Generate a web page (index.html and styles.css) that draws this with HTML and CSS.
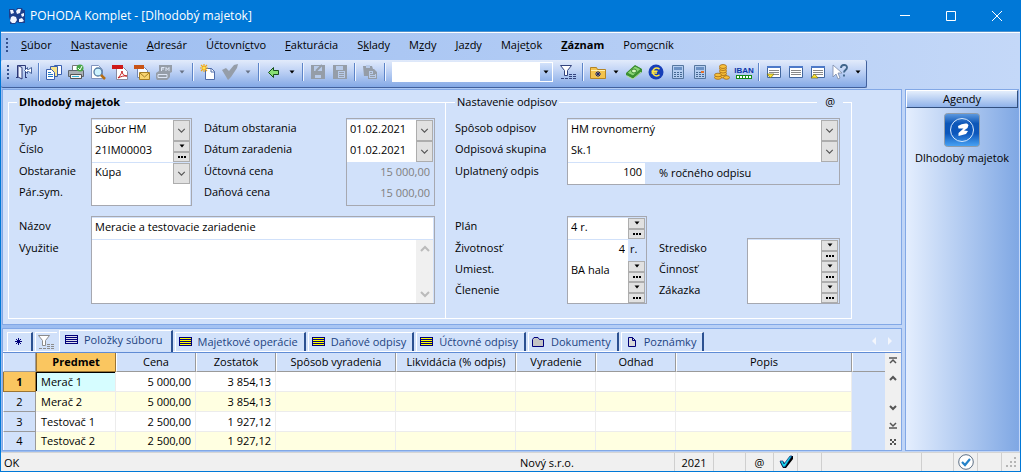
FILE: index.html
```html
<!DOCTYPE html>
<html lang="sk">
<head>
<meta charset="utf-8">
<title>POHODA Komplet - [Dlhodobý majetok]</title>
<meta name="viewport" content="width=device-width, initial-scale=1">
<link rel="stylesheet" href="styles.css">
</head>
<body>
<svg class="defs" aria-hidden="true">
  <symbol id="chev" viewBox="0 0 16 20"><path d="M4 8l4 4 4-4" fill="none" stroke="#555" stroke-width="1.4"/></symbol>
  <symbol id="tri" viewBox="0 0 8 8"><path d="M1.500 2.500h5L4 5.500z" fill="#000"/></symbol>
  <symbol id="dots" viewBox="0 0 8 8"><path d="M0 3h2v2H0zM3 3h2v2H3zM6 3h2v2H6z" fill="#000"/></symbol>
  <symbol id="grid-tab" viewBox="0 0 14 10"><path d="M0 0h13v9H0z" fill="#00007a"/><path d="M1 1.500h11M1 3.500h11M1 5.500h11M1 7.500h11" stroke="currentColor"/></symbol>
  <symbol id="funnel" viewBox="0 0 16 16"><path d="M.500 1.500h11L7.500 6.500v5h-3v-5z" fill="#fff" stroke="currentColor"/><path d="M9 10.500h3M13 10.500h3M1 14.500h3M5 14.500h3M9 14.500h3M13 14.500h3M9 12.500h3M13 12.500h3" stroke="currentColor"/></symbol>
  <symbol id="sheet" viewBox="0 0 16 16"><path d="M1.500 2.500h13v11h-13z" fill="#fff" stroke="#42679f"/><path d="M1 2h14v2H1z" fill="#4d79c8"/><path d="M3 6.500h10M3 8.500h10M3 10.500h10" stroke="#888"/></symbol>
  <symbol id="calc" viewBox="0 0 16 16"><path d="M2.500 1.500h11v13h-11z" fill="#b4cdf0" stroke="#56779f"/><path d="M4 3h8v3H4z" fill="#6c92c5"/><path d="M4 8.500h8M4 10.500h8M4 12.500h8" stroke="#456792" stroke-dasharray="2 1"/></symbol>
</svg>

<div class="window">
  <header class="titlebar">
    <svg class="logo" viewBox="0 0 16 16" aria-hidden="true"><path d="M0 1h5l2 2 1-3h5l1 2h2v13h-6l-2-1-2 2H1v-4L0 9z" fill="#1c3f8c"/><path d="M1 2h3l1 3-3 1zM7 3l2-2h3l-1 4-3 1zM12 6l3-1v3l-2 1zM2 9l2-1 3 1 1 3-2 3-3 0-2-2zM10 11l3-1 2 3-2 1h-3z" fill="#f0f5ff"/></svg>
    <h1>POHODA Komplet - [Dlhodobý majetok]</h1>
    <div class="caption">
      <button aria-label="Minimalizovať"><svg viewBox="0 0 12 12"><path d="M1 5.500h10" stroke="#fff"/></svg></button>
      <button aria-label="Maximalizovať"><svg viewBox="0 0 12 12"><path d="M1.500 1.500h9v9h-9z" fill="none" stroke="#fff"/></svg></button>
      <button aria-label="Zavrieť"><svg viewBox="0 0 12 12"><path d="M1 1l10 10M11 1L1 11" stroke="#fff"/></svg></button>
    </div>
  </header>

  <nav class="menubar">
    <span class="grip"></span>
    <button><u>S</u>úbor</button>
    <button><u>N</u>astavenie</button>
    <button><u>A</u>dresár</button>
    <button>Účtovní<u>c</u>tvo</button>
    <button><u>F</u>akturácia</button>
    <button>S<u>k</u>lady</button>
    <button>M<u>z</u>dy</button>
    <button><u>J</u>azdy</button>
    <button>Maje<u>t</u>ok</button>
    <button class="strong"><u>Z</u>áznam</button>
    <button>Pom<u>o</u>cník</button>
  </nav>

  <div class="toolbar" role="toolbar">
    <span class="grip"></span>
    <button class="tool" aria-label="Koniec"><svg viewBox="0 0 16 16"><path d="M1.500 13V1.500h8V13M0 13.500h2M9 13.500h2" fill="none" stroke="#2d3978"/><path d="M2 1.500l4 2v11.500l-4-2z" fill="#eef3ff" stroke="#2d3978"/><path d="M8.500 6.500l3-3v2h1l3-2v6l-3-2h-1v2z" fill="#fff" stroke="#48649d"/></svg></button>
    <span class="sep"></span>
    <button class="tool" aria-label="Kopírovať"><svg viewBox="0 0 16 16"><path d="M8.500 1.500h7v9h-7z" fill="#fff" stroke="#395fae"/><path d="M4.500 2.500h7v10h-7z" fill="#f7e48a" stroke="#395fae"/><path d="M.5 5.500h5l3 3v7h-8z" fill="#fff" stroke="#395fae"/><path d="M2 8.500h3M2 10.500h5M2 12.500h5" stroke="#2379c5"/></svg></button>
    <button class="tool" aria-label="Tlač"><svg viewBox="0 0 16 16"><path d="M4.500 1.500h7v5h-7z" fill="#fff" stroke="#777"/><path d="M.5 6.500h15v6H.5z" fill="#aab0b6" stroke="#5d646c"/><path d="M2.500 10.500h11v4h-11z" fill="#f5f5f5" stroke="#555"/><path d="M4 12.500h7" stroke="#36b3d8"/><circle cx="12" cy="4" r="3.500" fill="#46a647"/><path d="M10 4l2 2 2-4" fill="none" stroke="#fff"/></svg></button>
    <button class="tool" aria-label="Náhľad"><svg viewBox="0 0 16 16"><path d="M1.500 1.500h7l4 4v9h-11z" fill="#fff" stroke="#8193bd"/><circle cx="8" cy="8" r="4" fill="#cdf3ff" stroke="#547ca5" stroke-width="1.300"/><path d="M11 11l4 4" stroke="#b56d13" stroke-width="2.500"/></svg></button>
    <button class="tool" aria-label="PDF"><svg viewBox="0 0 16 16"><path d="M4.500 3.500h7l4 4v8h-11z" fill="#fff" stroke="#888ba0"/><path d="M0 1h11v4H0z" fill="#ce1919"/><path d="M6 14c3-3 4-6 4-7 0 3 2 5 5 5-3-.5-6 .5-9 2z" fill="none" stroke="#c31d1d"/></svg></button>
    <button class="tool" aria-label="E-mail"><svg viewBox="0 0 16 16"><path d="M3.500 3.500h7l3 3v7h-10z" fill="#f8faff" stroke="#7086b7"/><path d="M0 1h10v4H0z" fill="#c85315"/><path d="M5.500 8.500h10v7h-10z" fill="#f8d470" stroke="#a67e25"/><path d="M6 9l4.500 4L15 9" fill="none" stroke="#a67e25"/></svg></button>
    <button class="tool" aria-label="Fax"><svg viewBox="0 0 16 16"><path d="M3 1h13v7l-2 1v4l-3 3H1l-1-2V9l3-2z" fill="#959da8"/><path d="M5.500 7V3.500h3M6 5h2M10 7V3.500l1.500 2 1.500-2V7M2 10.500h9v3H2z" fill="none" stroke="#dce5f5"/></svg></button>
    <button class="drop dim" aria-label="Možnosti faxu"><svg viewBox="0 0 8 8"><use href="#tri"/></svg></button>
    <span class="sep"></span>
    <button class="tool" aria-label="Nový"><svg viewBox="0 0 16 16"><path d="M5.500 4.500h6l3 3v8h-9z" fill="#fff" stroke="#4e6cab"/><path d="M11 4v4h4" fill="none" stroke="#4e6cab"/><path d="M4 0v8M0 4h8M1 1l6 6M7 1L1 7" stroke="#f1a816" stroke-width="1.200"/><circle cx="4" cy="4" r="1.500" fill="#ffe252"/></svg></button>
    <button class="tool" aria-label="Potvrdiť"><svg viewBox="0 0 16 16"><path d="M0 6l4-2 3 3 5-6 4-1-1 4-6 9-3 3z" fill="#959da8"/></svg></button>
    <button class="drop dim" aria-label="Možnosti potvrdenia"><svg viewBox="0 0 8 8"><use href="#tri"/></svg></button>
    <span class="sep"></span>
    <button class="tool" aria-label="Späť"><svg viewBox="0 0 16 16"><path d="M2.500 8.500l5-5v3h5v4h-5v3z" fill="#88df73" stroke="#174f1d"/></svg></button>
    <button class="drop" aria-label="História"><svg viewBox="0 0 8 8"><use href="#tri"/></svg></button>
    <span class="sep"></span>
    <button class="tool" aria-label="Uložiť"><svg viewBox="0 0 16 16"><path d="M1 1h14v14H1z" fill="#959da8"/><path d="M4 2h8v5H4zM5 11h6v3H5z" fill="#b8cbea"/><path d="M6 7l6-6" stroke="#959da8" stroke-width="2"/></svg></button>
    <button class="tool" aria-label="Uložiť kópiu"><svg viewBox="0 0 16 16"><path d="M1 1h14v14H1z" fill="#959da8"/><path d="M4 2h7v4H4zM6 7h7v7H6z" fill="#b8cbea"/><path d="M7 8.500h5M7 10.500h5M7 12.500h5" stroke="#959da8"/></svg></button>
    <span class="sep"></span>
    <button class="tool" aria-label="Prilepiť"><svg viewBox="0 0 16 16"><path d="M1 2h9l1 3h1l3 3v7H6v-3H2z" fill="#959da8"/><path d="M7 7h4v3h3v4H7zM4 1h4v3H4z" fill="#b8cbea"/><path d="M8 8.500h2M8 10.500h5M8 12.500h5" stroke="#959da8"/></svg></button>
    <span class="sep"></span>
    <span class="search">
      <input type="text" aria-label="Hľadať">
      <button class="search-drop" aria-label="Zoznam hľadania"><svg viewBox="0 0 8 8"><use href="#tri"/></svg></button>
    </span>
    <button class="tool navy" aria-label="Filter"><svg viewBox="0 0 16 16"><use href="#funnel"/></svg></button>
    <span class="sep"></span>
    <button class="tool" aria-label="Priečinok"><svg viewBox="0 0 16 16"><path d="M.5 3.500h6l1 2h8v9H.5z" fill="#f3c34d" stroke="#b38527"/><path d="M1 6h14v1H1z" fill="#fff0ae"/><path d="M8 7v6M5 10h6M6 8l4 4M10 8l-4 4" stroke="#1b246c"/></svg></button>
    <button class="drop" aria-label="Zoznam priečinkov"><svg viewBox="0 0 8 8"><use href="#tri"/></svg></button>
    <button class="tool" aria-label="Peniaze"><svg viewBox="0 0 16 16"><path d="M0 9l9-8 7 4v3l-9 7-7-4z" fill="#3b9130"/><path d="M1 9l8-7 6 3-8 7z" fill="#8ad574" stroke="#378a2e"/><ellipse cx="8" cy="7" rx="2.500" ry="2" fill="#d6f6bf" stroke="#378a2e"/><path d="M1 12l6 3 8-7" fill="none" stroke="#b3e394"/></svg></button>
    <button class="tool" aria-label="Euro"><svg viewBox="0 0 16 16"><circle cx="8" cy="8" r="7.500" fill="#173eb8"/><path d="M11.500 5.200a4 4 0 1 0 0 5.600M3.500 7.200h6M3.500 9h5.500" fill="none" stroke="#ffe543" stroke-width="1.500"/></svg></button>
    <button class="tool" aria-label="Kalkulačka"><svg viewBox="0 0 16 16"><use href="#calc"/></svg></button>
    <button class="tool" aria-label="Kalkulačka meny"><svg viewBox="0 0 16 16"><use href="#calc"/><path d="M9 8h3" stroke="#e4702b" stroke-width="2"/></svg></button>
    <button class="tool" aria-label="Mince"><svg viewBox="0 0 16 16"><g fill="#f7c03c" stroke="#a56a12" stroke-width=".8"><ellipse cx="9" cy="12" rx="3.500" ry="2"/><ellipse cx="9" cy="9.500" rx="3.500" ry="2"/><ellipse cx="9" cy="7" rx="3.500" ry="2"/><ellipse cx="9" cy="4.500" rx="3.500" ry="2"/><ellipse cx="9" cy="2.500" rx="3.500" ry="2"/><ellipse cx="4" cy="13.500" rx="3.500" ry="1.800"/><ellipse cx="4" cy="11" rx="3.500" ry="1.800"/><ellipse cx="12.500" cy="13.500" rx="3" ry="1.800"/></g></svg></button>
    <button class="tool iban" aria-label="Kontrola IBAN"><span class="iban-text">IBAN</span><span class="iban-bar"></span></button>
    <span class="sep"></span>
    <button class="tool" aria-label="Dole"><svg viewBox="0 0 16 16"><use href="#sheet"/><path d="M1 10h7l-3.500 4z" fill="#ffe52e" stroke="#6e6817" stroke-width=".7"/></svg></button>
    <button class="tool" aria-label="Zoznam"><svg viewBox="0 0 16 16"><use href="#sheet"/></svg></button>
    <button class="tool" aria-label="Hore"><svg viewBox="0 0 16 16"><use href="#sheet"/><path d="M1 14h7l-3.500-4z" fill="#ffe52e" stroke="#6e6817" stroke-width=".7"/></svg></button>
    <button class="tool" aria-label="Pomoc"><svg viewBox="0 0 16 16"><path d="M1 1v12l3-3 2 5 2-1-2-5h4z" fill="#fff" stroke="#7889a8" stroke-width=".8"/><path d="M9 4c0-4 6-4 6-.5C15 6 12 6 12 8.500M12 10.500v2" fill="none" stroke="#42678c" stroke-width="1.900"/></svg></button>
    <button class="drop" aria-label="Možnosti pomoci"><svg viewBox="0 0 8 8"><use href="#tri"/></svg></button>
  </div>

  <div class="workspace">
    <div class="main">
      <form class="panel form">
        <fieldset class="group group-left">
          <legend class="strong">Dlhodobý majetok</legend>
          <div class="block">
            <div class="pair type">
              <div class="labels split-2"><label for="typ">Typ</label><label for="cislo">Číslo</label><label for="obst">Obstaranie</label><label for="par">Pár.sym.</label></div>
              <div class="box split-2">
                <div class="field"><select id="typ"><option>Súbor HM</option></select><svg class="combo"><use href="#chev"/></svg></div>
                <div class="field"><input id="cislo" value="21IM00003"><span class="spin"><button type="button" aria-label="Zoznam čísel"><svg><use href="#tri"/></svg></button><button type="button" aria-label="Vybrať číslo"><svg><use href="#dots"/></svg></button></span></div>
                <div class="field"><select id="obst"><option>Kúpa</option></select><svg class="combo"><use href="#chev"/></svg></div>
                <div class="field"><input id="par"></div>
              </div>
            </div>
            <div class="pair dates">
              <div class="labels split-2"><label for="dobst">Dátum obstarania</label><label for="dzar">Dátum zaradenia</label><label for="ucena">Účtovná cena</label><label for="dcena">Daňová cena</label></div>
              <div class="box split-2">
                <div class="field"><select id="dobst"><option>01.02.2021</option></select><svg class="combo"><use href="#chev"/></svg></div>
                <div class="field"><select id="dzar"><option>01.02.2021</option></select><svg class="combo"><use href="#chev"/></svg></div>
                <div class="field readonly"><input id="ucena" value="15 000,00" readonly></div>
                <div class="field readonly"><input id="dcena" value="15 000,00" readonly></div>
              </div>
            </div>
          </div>
          <div class="block">
            <div class="pair type wide">
              <div class="labels split-1"><label for="nazov">Názov</label><label for="vyuz">Využitie</label></div>
              <div class="box split-1">
                <div class="field"><input id="nazov" value="Meracie a testovacie zariadenie"></div>
                <div class="memo"><textarea id="vyuz"></textarea><span class="memo-scroll"><svg viewBox="0 0 10 8"><path d="M1 6l4-4 4 4" fill="none" stroke="#bbb" stroke-width="2"/></svg><svg viewBox="0 0 10 8"><path d="M1 2l4 4 4-4" fill="none" stroke="#bbb" stroke-width="2"/></svg></span></div>
              </div>
            </div>
          </div>
        </fieldset>

        <fieldset class="group group-right">
          <legend>Nastavenie odpisov</legend>
          <span class="at">@</span>
          <div class="block">
            <div class="pair method wide">
              <div class="labels split-2"><label for="spos">Spôsob odpisov</label><label for="skup">Odpisová skupina</label><label for="upl">Uplatnený odpis</label></div>
              <div class="box split-2">
                <div class="field"><select id="spos"><option>HM rovnomerný</option></select><svg class="combo"><use href="#chev"/></svg></div>
                <div class="field"><select id="skup"><option>Sk.1</option></select><svg class="combo"><use href="#chev"/></svg></div>
                <div class="field percent"><input id="upl" value="100"><span>% ročného odpisu</span></div>
              </div>
            </div>
          </div>
          <div class="block">
            <div class="pair method plan">
              <div class="labels split-1"><label for="plan">Plán</label><label for="ziv">Životnosť</label><label for="umi">Umiest.</label><label for="cle">Členenie</label></div>
              <div class="box split-1">
                <div class="field"><input id="plan" value="4 r."><span class="spin"><button type="button" aria-label="Zoznam plánov"><svg><use href="#tri"/></svg></button><button type="button" aria-label="Vybrať plán"><svg><use href="#dots"/></svg></button></span></div>
                <div class="field years"><input id="ziv" value="4"><span>r.</span></div>
                <div class="field"><input id="umi" value="BA hala"><span class="spin"><button type="button" aria-label="Zoznam umiestnení"><svg><use href="#tri"/></svg></button><button type="button" aria-label="Vybrať umiestnenie"><svg><use href="#dots"/></svg></button></span></div>
                <div class="field"><input id="cle"><span class="spin"><button type="button" aria-label="Zoznam členení"><svg><use href="#tri"/></svg></button><button type="button" aria-label="Vybrať členenie"><svg><use href="#dots"/></svg></button></span></div>
              </div>
            </div>
            <div class="pair centre wide">
              <div class="labels"><label for="str">Stredisko</label><label for="cin">Činnosť</label><label for="zak">Zákazka</label></div>
              <div class="box">
                <div class="field"><input id="str"><span class="spin"><button type="button" aria-label="Zoznam stredísk"><svg><use href="#tri"/></svg></button><button type="button" aria-label="Vybrať stredisko"><svg><use href="#dots"/></svg></button></span></div>
                <div class="field"><input id="cin"><span class="spin"><button type="button" aria-label="Zoznam činností"><svg><use href="#tri"/></svg></button><button type="button" aria-label="Vybrať činnosť"><svg><use href="#dots"/></svg></button></span></div>
                <div class="field"><input id="zak"><span class="spin"><button type="button" aria-label="Zoznam zákaziek"><svg><use href="#tri"/></svg></button><button type="button" aria-label="Vybrať zákazku"><svg><use href="#dots"/></svg></button></span></div>
              </div>
            </div>
          </div>
        </fieldset>
      </form>

      <section class="panel detail">
        <div class="tabs" role="tablist">
          <button class="tab short" role="tab" aria-label="Nový záznam"><svg viewBox="0 0 14 10"><path d="M6.500 1v7M3 4.500h7M4 2l5 5M9 2L4 7" stroke="#00007a"/></svg></button>
          <button class="tab short filter" role="tab" aria-label="Filter"><svg viewBox="0 0 16 16"><use href="#funnel"/></svg></button>
          <button class="tab active" role="tab" aria-selected="true"><svg class="stripes"><use href="#grid-tab"/></svg>Položky súboru</button>
          <button class="tab" role="tab"><svg class="stripes yellow"><use href="#grid-tab"/></svg>Majetkové operácie</button>
          <button class="tab" role="tab"><svg class="stripes yellow"><use href="#grid-tab"/></svg>Daňové odpisy</button>
          <button class="tab" role="tab"><svg class="stripes yellow"><use href="#grid-tab"/></svg>Účtovné odpisy</button>
          <button class="tab" role="tab"><svg viewBox="0 0 14 10"><path d="M.5 9.500v-7l1.500-2h4l1.500 2h4v7z" fill="#c4c4c4" stroke="#00007a"/></svg>Dokumenty</button>
          <button class="tab" role="tab"><svg viewBox="0 0 14 10"><path d="M3.500.5h4l3 3v6h-7z" fill="#d9d9d9" stroke="#00007a"/><path d="M7.500.5v3h3" fill="none" stroke="#00007a"/></svg>Poznámky</button>
          <svg class="tab-nav" viewBox="0 0 20 8"><path d="M4 0v8L0 4zM16 0v8l4-4z" fill="#f3f6fc"/></svg>
        </div>
        <div class="grid">
          <table>
            <colgroup><col class="c-num"><col class="c-80"><col class="c-80"><col class="c-80"><col class="c-120"><col class="c-120"><col class="c-80"><col class="c-80"><col><col class="c-fill"></colgroup>
            <thead><tr><th></th><th class="sel">Predmet</th><th>Cena</th><th>Zostatok</th><th>Spôsob vyradenia</th><th>Likvidácia (% odpis)</th><th>Vyradenie</th><th>Odhad</th><th>Popis</th><th class="fill"></th></tr></thead>
            <tbody>
              <tr><th class="sel">1</th><td class="cursor">Merač 1</td><td class="num">5 000,00</td><td class="num">3 854,13</td><td></td><td></td><td></td><td></td><td></td><td class="fill"></td></tr>
              <tr><th>2</th><td>Merač 2</td><td class="num">5 000,00</td><td class="num">3 854,13</td><td></td><td></td><td></td><td></td><td></td><td class="fill"></td></tr>
              <tr><th>3</th><td>Testovač 1</td><td class="num">2 500,00</td><td class="num">1 927,12</td><td></td><td></td><td></td><td></td><td></td><td class="fill"></td></tr>
              <tr><th>4</th><td>Testovač 2</td><td class="num">2 500,00</td><td class="num">1 927,12</td><td></td><td></td><td></td><td></td><td></td><td class="fill"></td></tr>
            </tbody>
          </table>
          <div class="rail">
            <svg viewBox="0 0 8 8"><path d="M0 1h8M1 6l3-3 3 3" fill="none" stroke="#555" stroke-width="1.500"/></svg>
            <svg viewBox="0 0 8 8"><path d="M1 6l3-3 3 3" fill="none" stroke="#555" stroke-width="2"/></svg>
            <svg class="down" viewBox="0 0 8 8"><path d="M1 2l3 3 3-3" fill="none" stroke="#555" stroke-width="2"/></svg>
            <svg viewBox="0 0 8 8"><path d="M0 7h8M1 2l3 3 3-3" fill="none" stroke="#555" stroke-width="1.500"/></svg>
            <svg viewBox="0 0 8 8"><path d="M1 1h2v2H1zM5 1h2v2H5zM3 3h2v2H3zM1 5h2v2H1zM5 5h2v2H5z" fill="#555"/></svg>
          </div>
        </div>
      </section>
    </div>

    <aside class="agendas">
      <h2>Agendy</h2>
      <a href="#majetok">
        <svg viewBox="0 0 36 34"><defs><linearGradient id="ag" x1="0" y1="0" x2="0" y2="1"><stop offset="0" stop-color="#5f9be0"/><stop offset=".3" stop-color="#0d57b8"/><stop offset=".6" stop-color="#0b56bb"/><stop offset="1" stop-color="#4aa4f5"/></linearGradient></defs><rect x=".5" y=".5" width="35" height="33" rx="3" fill="url(#ag)" stroke="#8f9cab"/><circle cx="18" cy="17" r="11.500" fill="none" stroke="#d8eaff"/><path d="M14 13q4-3 9-2.500l1.500 1.500-1 3-3.500 2.500 4 .5-2 3-7.500 2 0-3 5-4.500-5 0z" fill="#fff"/></svg>
        <span>Dlhodobý majetok</span>
      </a>
    </aside>
  </div>

  <footer class="status">
    <span class="s-ok">OK</span>
    <span class="s-firm">Nový s.r.o.</span>
    <span class="s-cell s-year">2021</span>
    <span class="s-cell s-gap"></span>
    <span class="s-cell s-at">@</span>
    <span class="s-cell s-24"><svg viewBox="0 0 14 14"><path d="M1 7h4l1 2 6-8h2v3L7 13H4z" fill="#000"/><path d="M1 6h3l1 3 6-8h2L6 12H4z" fill="#18d4e8" stroke="#0a1f6c" stroke-width=".7"/></svg></span>
    <span class="s-cell s-24"></span>
    <span class="s-cell s-100"></span>
    <span class="s-cell s-gap"></span>
    <span class="s-cell s-24"><svg class="round" viewBox="0 0 16 16"><circle cx="8" cy="8" r="7.300" fill="#fff" stroke="#4b6078" stroke-width=".9"/><path d="M4 8l3 3 5-6" fill="none" stroke="#2382c9" stroke-width="2.200"/></svg></span>
    <span class="s-cell s-24"></span>
    <span class="s-cell s-end"><svg viewBox="0 0 10 10"><path d="M8 0h2v2H8zM4 4h2v2H4zM8 4h2v2H8zM0 8h2v2H0zM4 8h2v2H4zM8 8h2v2H8z" fill="#b5b5b5"/></svg></span>
  </footer>
</div>
</body>
</html>
```

FILE: styles.css
```css
* { box-sizing: border-box; }

:root {
  --face: #d1e1fa;
  --edge: #82a8e6;
  --gray: #a6a8b0;
  --blue: #0078d7;
}

body {
  margin: 0;
  font: 11px/16px "Open Sans", "Noto Sans", sans-serif;
  color: #000;
}

button, input, select, textarea {
  font: inherit;
  color: inherit;
  margin: 0;
  padding: 0;
  border: 0;
  border-radius: 0;
  background: transparent;
}

input, select, textarea { outline: 0; min-width: 0; }
svg { display: block; flex: none; }
.defs { position: absolute; width: 0; height: 0; }
.strong, .menubar .strong { font-weight: 700; }

.window {
  min-height: 100vh;
  display: flex;
  flex-direction: column;
  border: 1px solid var(--blue);
  border-top: 0;
  background: linear-gradient(90deg, #9bbcf0, #c4d8f8);
}

.titlebar {
  display: flex;
  align-items: center;
  height: 32px;
  padding-left: 8px;
  background: var(--blue);
  border-bottom: 1px solid #4d92cf;
  color: #fff;
}
.titlebar h1 { margin: 0; font-size: 12px; font-weight: 400; flex: 1; }
.logo { width: 16px; height: 16px; margin-right: 5px; }
.caption { display: flex; }
.caption button { width: 46px; height: 30px; display: grid; place-items: center; }
.caption svg { width: 12px; height: 12px; }

.menubar {
  display: flex;
  align-items: center;
  gap: 19px;
  height: 28px;
  padding: 0 0 3px 5px;
  border-top: 1px solid #fff;
}
.menubar .grip { margin-right: -6px; }
.grip {
  width: 2px;
  height: 14px;
  background: repeating-linear-gradient(#32508c 0 2px, transparent 2px 4px);
}

.toolbar {
  display: flex;
  align-items: center;
  align-self: flex-start;
  height: 28px;
  padding: 0 1px 3px 6px;
  border-bottom: 1px solid #41609c;
  border-right: 1px solid #41609c;
  border-radius: 2px;
  background: linear-gradient(#e2ebfb, #c0d3f5 40%, #84a9e6);
}
.toolbar .grip { margin-right: 4px; }
.tool { width: 22px; height: 22px; display: grid; place-items: center; }
.tool svg { width: 16px; height: 16px; }
.navy { color: #33437d; }
.drop { width: 14px; height: 22px; display: grid; place-items: center; }
.drop svg { width: 8px; height: 8px; }
.dim { opacity: .45; }
.sep { width: 1px; height: 18px; margin: 0 4px 0 3px; background: #5c84c8; box-shadow: 1px 0 #eef4ff; }
.search { display: flex; width: 161px; height: 20px; margin: 0 4px 0 3px; background: #fff; }
.search input { flex: 1; padding: 0 4px; }
.search-drop { width: 13px; display: grid; place-items: center; border: 1px solid #fff; border-left: 0; background: linear-gradient(#d3e2fb, #8fb2ea); }
.search-drop svg { width: 8px; height: 8px; }
.iban { align-content: center; }
.iban-text { font: 700 8px/9px "Liberation Sans", sans-serif; color: #0d35a8; }
.iban-bar { width: 16px; height: 4px; border: 1px solid #148a16; background: repeating-linear-gradient(90deg, #fff 0 2px, #148a16 2px 3px); }

.workspace { flex: 1; display: flex; gap: 3px; padding: 1px; }
.main { flex: 1; min-width: 0; display: flex; flex-direction: column; gap: 3px; }
.panel { border: 1px solid var(--edge); background: var(--face); }

.form { display: grid; grid-template-columns: 437fr 407fr; padding: 3px 49px 5px 5px; }
.group { position: relative; margin: 0; min-width: 0; padding: 7px 10px 14px; border: 1px solid #fff; }
.group-left { border-right: 0; }
.group-right { padding-left: 9px; padding-right: 11px; }
.group legend { padding: 0 2px; height: 18px; line-height: 18px; }
.group-left legend { padding-right: 5px; margin-left: -2px; }
.at { position: absolute; top: -18px; right: 8px; padding: 0 8px; line-height: 18px; background: var(--face); }

.block { display: flex; gap: 12px; height: 88px; }
.block + .block { margin-top: 10px; }
.pair { display: flex; flex: none; align-items: flex-start; }
.pair.wide, .pair.dates { flex: 1; }
.labels { display: flex; flex-direction: column; flex: none; }
.labels label { height: 21px; line-height: 20px; white-space: nowrap; }
.type .labels { width: 72px; }
.dates .labels { width: 142px; }
.method .labels { width: 112px; }
.centre .labels { width: 88px; }
.centre { padding-top: 22px; }

.box {
  flex: 1;
  min-width: 0;
  border: 1px solid var(--gray);
  padding: 1px 1px 0 0;
  background: var(--face);
}
.type:not(.wide) .box { width: 101px; }
.plan .box { width: 80px; }
.split-1 > :nth-child(1), .split-2 > :nth-child(2) { margin-bottom: 1px; }

.field { position: relative; display: flex; height: 21px; background: #fff; }
.field input, .field select { flex: 1; width: 0; padding: 0 3px 3px; }
.field select { appearance: none; }
.combo { position: absolute; right: 0; top: 0; width: 17px; height: 21px; padding: 0 1px; border: 1px solid #adadad; background: #e1e1e1; pointer-events: none; }
.spin { display: flex; flex-direction: column; width: 17px; }
.spin button { height: 10px; display: grid; place-items: center; padding-left: 1px; border: 1px solid #adadad; background: #e1e1e1; }
.spin button:first-child { height: 11px; padding-bottom: 1px; }
.spin svg { width: 8px; height: 8px; }
.readonly { background: var(--face); color: #7f7f7f; }
.readonly input { text-align: right; }
.percent, .years { background: var(--face); align-items: stretch; }
.percent input { flex: none; width: 77px; background: #fff; text-align: right; }
.percent span { padding-left: 14px; line-height: 19px; }
.years input { background: #fff; text-align: right; }
.years span { width: 17px; padding-left: 2px; line-height: 18px; }
.memo { display: flex; height: 63px; background: #fff; }
.memo textarea { flex: 1; resize: none; padding: 2px 3px; }
.memo-scroll { width: 17px; display: flex; flex-direction: column; justify-content: space-between; align-items: center; padding: 5px 0; background: #f0f0f0; }
.memo-scroll svg { width: 10px; height: 8px; }

.tabs { display: flex; align-items: flex-end; gap: 2px; height: 24px; padding: 2px 9px 0 4px; border-bottom: 1px solid #5f8bd4; box-shadow: inset 0 -1px #fff; color: #1d4482; }
.tab { display: flex; align-items: center; gap: 5px; height: 19px; padding: 0 6px 0 3px; margin-bottom: 1px; border-top: 1px solid #fff; border-left: 1px solid #fff; border-right: 2px solid #2c5191; white-space: nowrap; }
.tab svg { width: 14px; height: 10px; }
.tab .stripes { color: #dcdcec; }
.tab .yellow { color: #ff0; }
.tab.short { width: 26px; padding: 0 4px; }
.tab.filter { width: 22px; padding: 0 2px; border-right: 0; color: #8c8c8c; }
.tab.filter svg { width: 16px; height: 16px; }
.tab.active { height: 22px; margin-bottom: 0; padding: 0 8px 3px 5px; background: var(--face); }
.tab-nav { width: 20px; height: 8px; margin: 0 0 7px auto; }

.grid { display: flex; }
.grid table { flex: 1; table-layout: fixed; width: 0; border-collapse: separate; border-spacing: 0; }
.c-num { width: 33px; }
.c-80 { width: 80px; }
.c-120 { width: 120px; }
.c-fill { width: 33px; }
.grid th { height: 20px; padding: 0; font-weight: 400; background: var(--face); border-right: 1px solid #9a9a9a; border-bottom: 1px solid #9a9a9a; border-left: 1px solid #fff; white-space: nowrap; }
.grid thead th { height: 19px; }
.grid td { height: 20px; padding: 0 4px 0 5px; background: #fff; border-right: 1px solid #ececec; border-bottom: 1px solid #ececec; }
.grid tbody tr:nth-child(even) td { background: #ffffe1; }
.grid tbody tr:last-child > * { height: 18px; border-bottom: 0; }
.grid .num { text-align: right; }
.grid .sel { background: #fac660; border-color: #9b7431; font-weight: 700; }
.grid td.cursor { background: #d6fdff; box-shadow: inset 1px 1px #000; }
.grid tbody tr td.fill { background: var(--face); border: 0; }
.grid th.fill { border-right: 0; }
.rail { display: flex; flex-direction: column; align-items: center; gap: 9px; width: 16px; padding: 4px 0; background: #f0f0f0; }
.rail svg { width: 8px; height: 8px; }
.rail .down { margin-top: auto; }

.agendas { width: 114px; border: 1px solid var(--edge); background: linear-gradient(90deg, #e4eefe, #80a8e4); }
.agendas h2 { margin: 0; font-size: 11px; font-weight: 400; line-height: 16px; text-align: center; border: 1px solid #fff; border-right-color: #33507f; border-bottom-color: #33507f; background: linear-gradient(#e4eefc, #8fb2ea); }
.agendas a { display: flex; flex-direction: column; align-items: center; gap: 3px; padding-top: 5px; color: #000; text-decoration: none; white-space: nowrap; }
.agendas a svg { width: 36px; height: 34px; }

.status { display: flex; align-items: stretch; height: 19px; line-height: 19px; background: #f0f0f0; border-top: 1px solid #d5d5d5; padding: 0 1px; }
.s-ok { flex: 1; padding-left: 2px; }
.s-firm { width: 154px; }
.s-cell { display: flex; align-items: center; justify-content: center; border-left: 1px solid #cfcfcf; }
.s-cell svg { width: 14px; height: 14px; }
.s-cell svg.round { width: 16px; height: 16px; }
.s-year { width: 39px; }
.s-gap { width: 32px; }
.s-at { width: 28px; }
.s-24 { width: 24px; }
.s-100 { width: 100px; }
.s-end { width: 18px; }
.s-end svg { width: 10px; height: 10px; }
```
